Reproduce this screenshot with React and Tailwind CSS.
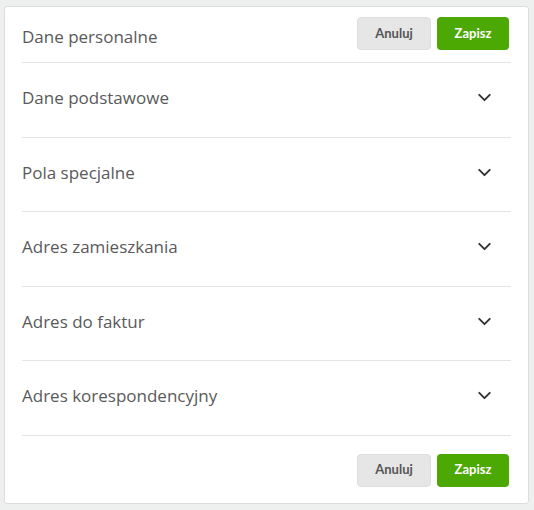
import { ChevronDown } from 'lucide-react'

const sections = [
  'Dane podstawowe',
  'Pola specjalne',
  'Adres zamieszkania',
  'Adres do faktur',
  'Adres korespondencyjny',
]

function Buttons() {
  return (
    <div className="mr-[2px] flex items-center gap-[6px] font-['Lato',sans-serif]">
      <button className="h-[33px] w-[74px] rounded-[4px] border border-[#dedede] bg-[#e6e6e6] text-[13px] font-bold text-[#555]">
        Anuluj
      </button>
      <button className="h-[33px] w-[72px] rounded-[4px] bg-[#4ca802] text-[13px] font-bold text-white">
        Zapisz
      </button>
    </div>
  )
}

export default function App() {
  return (
    <div className="min-h-[510px] bg-[#eef0ef] px-[4px] pt-[6px] font-['Open_Sans',sans-serif]">
      <div className="w-[525px] rounded-[3px] border border-[#dcdcdc] bg-white px-[17px]">
        <div className="flex h-[56px] items-start justify-between border-b border-[#e4e4e4] pt-[10px]">
          <h2 className="pt-[7px] text-[17px] text-[#5a5a5a]">Dane personalne</h2>
          <Buttons />
        </div>
        {sections.map((title) => (
          <div
            key={title}
            className="flex h-[74.5px] items-center justify-between border-b border-[#e4e4e4] pb-[4px]"
          >
            <span className="text-[17px] text-[#5a5a5a]">{title}</span>
            <ChevronDown size={21} strokeWidth={2.2} className="mr-[16px] text-[#333]" />
          </div>
        ))}
        <div className="flex justify-end pb-[16px] pt-[18px]">
          <Buttons />
        </div>
      </div>
    </div>
  )
}
